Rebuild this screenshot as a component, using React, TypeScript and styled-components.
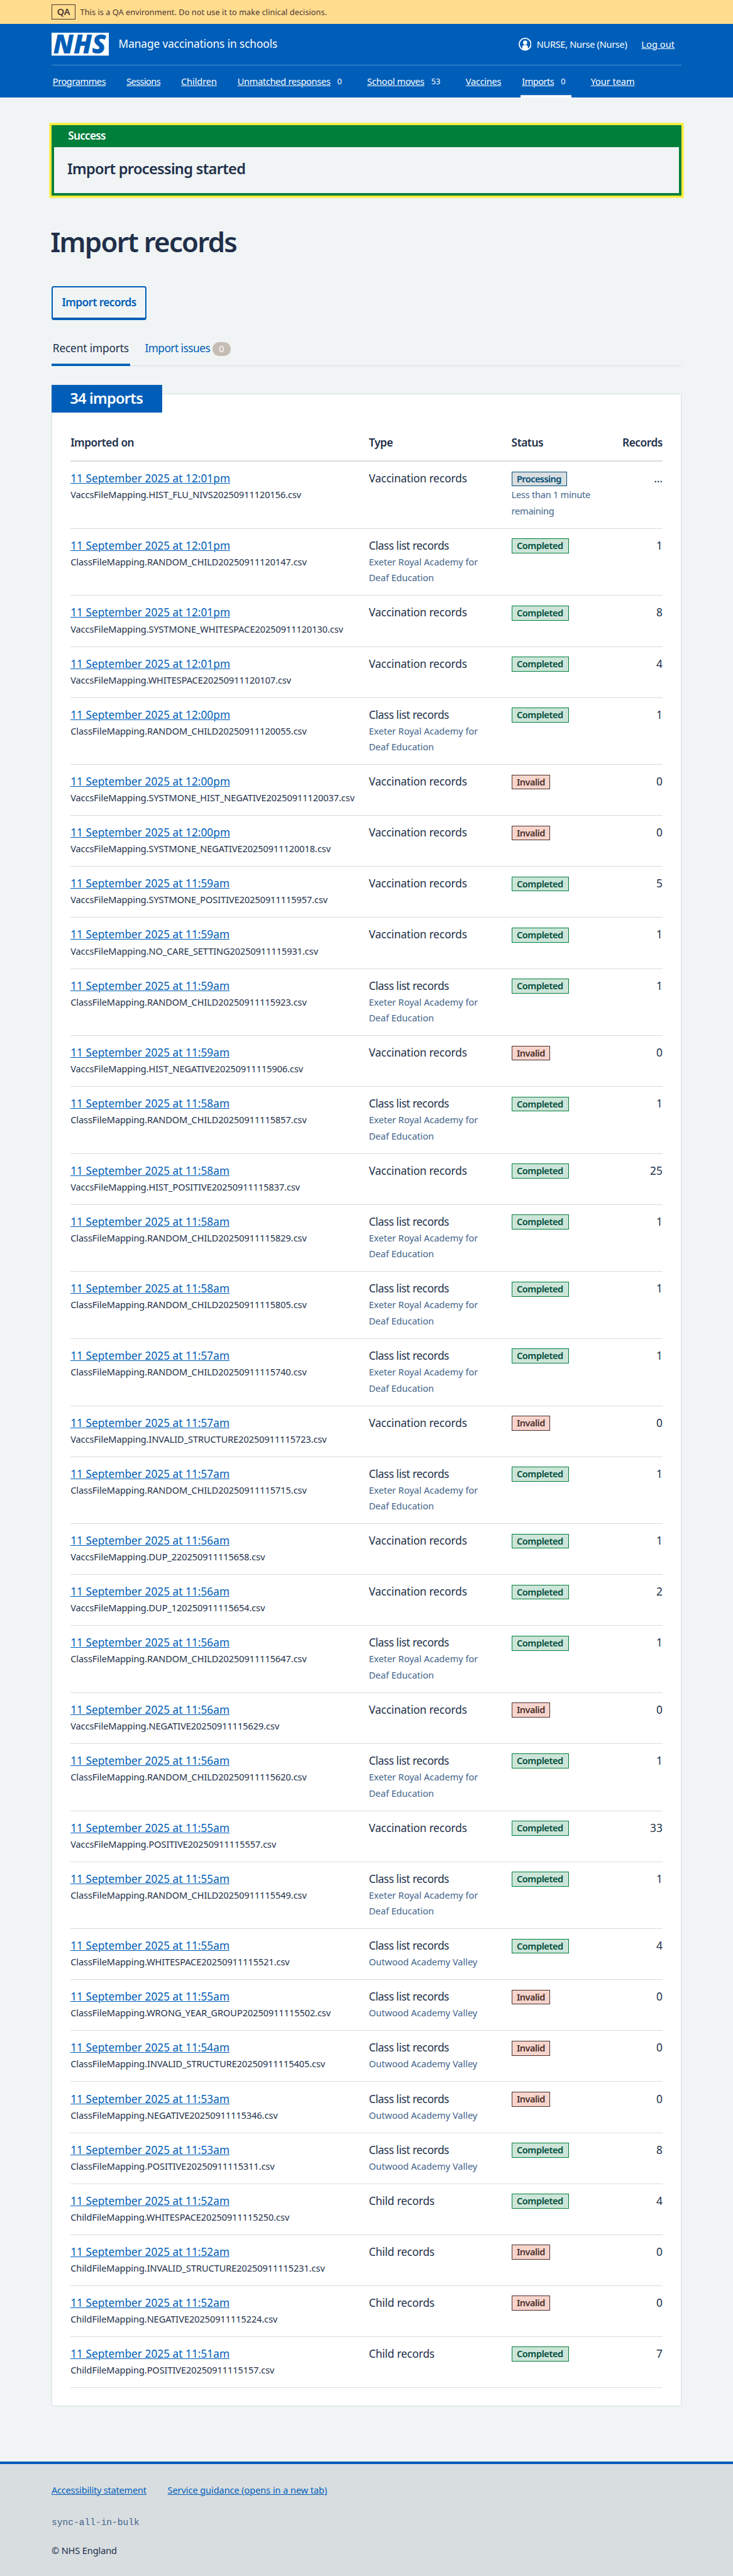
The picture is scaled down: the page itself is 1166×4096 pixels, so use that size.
import React from "react";
import styled, { createGlobalStyle, css } from "styled-components";

/* Design units are converted to screen pixels with one page-wide factor. */
const SCALE = 4096 / 4496;
const u = (...n: number[]) => n.map((v) => `${+(v * SCALE).toFixed(3)}px`).join(" ");

const color = {
  blue: "#005eb8",
  text: "#212f49",
  muted: "#42648a",
  page: "#f0f4f5",
  border: "#d8dde0",
  green: "#007f3b",
  focus: "#ffeb3b",
  white: "#ffffff",
};

const font = (size: number, line: number, weight = 400, track = 0) => css`
  font-size: ${u(size)};
  line-height: ${u(line)};
  font-weight: ${weight};
  letter-spacing: ${track}em;
`;

const GlobalStyle = createGlobalStyle`
  *, *::before, *::after { box-sizing: border-box; }
  body {
    margin: 0;
    background: ${color.page};
    color: ${color.text};
    font-family: "Noto Sans", "Open Sans", sans-serif;
  }
  h1, h2, h3, p, ul { margin: 0; padding: 0; font-weight: inherit; }
  ul { list-style: none; }
`;

const Page = styled.div`
  display: flex;
  flex-direction: column;
  height: 4096px;
  overflow: hidden;
`;

const Link = styled.a`
  color: ${color.blue};
  text-decoration: underline;
  text-decoration-thickness: 1px;
  text-underline-offset: ${u(1.6)};
`;

const EnvironmentBar = styled.div`
  display: flex;
  flex-shrink: 0;
  align-items: center;
  gap: ${u(8)};
  height: ${u(42)};
  padding: ${u(0, 90)};
  background: #ffdc8e;
  color: #4d3635;
  white-space: nowrap;
`;

const EnvironmentTag = styled.strong`
  width: ${u(42)};
  height: ${u(26)};
  border: 1px solid #4d3635;
  text-align: center;
  ${font(16, 23.6, 600)}
`;

const EnvironmentText = styled.span`
  ${font(14, 24, 400, 0.003)}
  padding-top: ${u(1)};
`;

const Header = styled.header`
  display: flex;
  flex-direction: column;
  flex-shrink: 0;
  height: ${u(128)};
  padding: ${u(0, 90)};
  background: ${color.blue};
  color: ${color.white};
`;

const HeaderTop = styled.div`
  display: flex;
  align-items: center;
  height: ${u(72)};
  border-bottom: 1px solid #4b92d2;
  white-space: nowrap;
`;

const Logo = styled.svg`
  display: block;
  width: ${u(100)};
  height: ${u(40)};
  overflow: visible;
`;

const ServiceName = styled.span`
  ${font(19, 28, 400, -0.0063)}
  padding: ${u(0, 0, 2, 17)};
`;

const Account = styled.div`
  display: flex;
  align-items: center;
  margin-left: auto;
  padding-right: ${u(12)};
`;

const AccountIcon = styled.svg`
  width: ${u(22.6)};
  height: ${u(22.6)};
  margin-right: ${u(9.4)};
`;

const AccountName = styled.span`
  ${font(16, 28, 400, -0.02)}
  margin-right: ${u(25)};
`;

const LogOut = styled(Link)`
  color: ${color.white};
  ${font(16, 28, 400, 0.005)}
`;

const Nav = styled.nav`
  display: flex;
  gap: ${u(32.2)};
  height: ${u(56)};
  white-space: nowrap;
`;

const NavItem = styled.div<{ $current?: boolean }>`
  display: flex;
  align-items: center;
  padding: ${u(0, 2)};
  box-shadow: ${(p) => (p.$current ? `inset 0 -${u(4)} 0 ${color.white}` : "none")};
`;

const NavLink = styled(Link)<{ $track: number }>`
  color: ${color.white};
  ${(p) => font(16, 28, 400, p.$track)}
`;

const NavCount = styled.span`
  ${font(14, 28)}
  padding: ${u(1.4, 8, 0, 12)};
`;

const Main = styled.main`
  display: flex;
  flex-direction: column;
  flex-shrink: 0;
  align-items: stretch;
  padding: ${u(48, 90, 0)};
`;

const Notice = styled.section`
  height: ${u(123)};
  border: ${u(4.4)} solid ${color.green};
  border-top: 0;
  box-shadow: 0 0 0 ${u(4)} ${color.focus};
`;

const NoticeTitle = styled.h2`
  height: ${u(39)};
  padding: ${u(4, 24.5)};
  background: ${color.green};
  color: ${color.white};
  ${font(19, 29, 600, -0.0466)}
`;

const NoticeText = styled.p`
  padding: ${u(21, 23)};
  ${font(26, 35, 600, -0.031)}
`;

const Title = styled.h1`
  margin: ${u(50.7, 0, 0, -2)};
  ${font(48, 60, 600, -0.0395)}
`;

const Button = styled.button`
  align-self: flex-start;
  width: ${u(166)};
  height: ${u(60)};
  margin-top: ${u(47.3)};
  padding: ${u(0, 0, 1)};
  border: 2px solid ${color.blue};
  border-bottom-width: ${u(4.4)};
  border-radius: ${u(4)};
  background: transparent;
  color: ${color.blue};
  font-family: inherit;
  white-space: nowrap;
  ${font(19, 28, 600, -0.0352)}
`;

const Tabs = styled.div`
  display: flex;
  height: ${u(60)};
  margin-top: ${u(20)};
  border-bottom: 1px solid ${color.border};
`;

const Tab = styled.a<{ $current?: boolean }>`
  display: flex;
  align-items: flex-start;
  height: ${u(60)};
  padding: ${u(14.6, 2, 0)};
  margin-right: ${u(24)};
  white-space: nowrap;
  color: ${(p) => (p.$current ? color.text : color.blue)};
  box-shadow: ${(p) => (p.$current ? `inset 0 -${u(4)} 0 ${color.blue}` : "none")};
  ${(p) => font(19, 28, 400, p.$current ? -0.0096 : -0.0312)}
`;

const TabCount = styled.span`
  width: ${u(32)};
  height: ${u(24)};
  margin: ${u(3.4, 0, 0, 4)};
  border-radius: ${u(12)};
  background: #c5bcb3;
  color: ${color.white};
  text-align: center;
  ${font(16, 24)}
`;

const Card = styled.section`
  height: ${u(3512.7)};
  margin-top: ${u(48)};
  padding: ${u(0, 32)};
  border: 1px solid ${color.border};
  background: ${color.white};
`;

const CardTitle = styled.h2`
  width: ${u(193)};
  height: ${u(48)};
  margin: ${u(-16, 0, 0, -33)};
  padding-left: ${u(32)};
  background: ${color.blue};
  color: ${color.white};
  white-space: nowrap;
  ${font(26, 46.6, 600, -0.033)}
`;

const row = css`
  display: grid;
  grid-template-columns: ${u(521, 249)} 1fr ${u(110)};
  white-space: nowrap;
`;

const TableHead = styled.div`
  ${row}
  height: ${u(86)};
  padding-top: ${u(38.8)};
  border-bottom: 2px solid ${color.border};
`;

const HeadCell = styled.div<{ $end?: boolean }>`
  text-align: ${(p) => (p.$end ? "right" : "left")};
  ${font(19, 28, 600, -0.027)}
`;

const Row = styled.div<{ $tall: boolean }>`
  ${row}
  height: ${(p) => u(p.$tall ? 117 : 89)};
  padding-top: ${u(14.3)};
  border-bottom: 1px solid ${color.border};
`;

const Primary = styled.div<{ $end?: boolean; $track?: number }>`
  text-align: ${(p) => (p.$end ? "right" : "left")};
  ${(p) => font(19, 29.7, 400, p.$track ?? 0)}
`;

const FileName = styled.div`
  ${font(16, 28, 400, -0.0055)}
`;

const Hint = styled.div<{ $track: number }>`
  color: ${color.muted};
  white-space: pre-line;
  ${(p) => font(16, 28, 400, p.$track)}
`;

type Status = "Processing" | "Completed" | "Invalid";

const tagLook = {
  Processing: { bg: "#d8dde0", fg: "#004b72", width: 96.6, track: -0.039 },
  Completed: { bg: "#cce5d8", fg: "#004c3a", width: 100, track: -0.028 },
  Invalid: { bg: "#f7d4cb", fg: "#4a2f2d", width: 67.8, track: -0.035 },
};

const Tag = styled.strong<{ $status: Status }>`
  display: block;
  width: ${(p) => u(tagLook[p.$status].width)};
  height: ${u(26)};
  margin: ${u(2.7, 0, 1)};
  padding-left: ${u(8)};
  border: 1px solid ${(p) => (p.$status === "Completed" ? color.green : tagLook[p.$status].fg)};
  background: ${(p) => tagLook[p.$status].bg};
  color: ${(p) => tagLook[p.$status].fg};
  ${(p) => font(16, 23.6, 600, tagLook[p.$status].track)}
`;

const Footer = styled.footer`
  flex: 1 0 auto;
  margin-top: ${u(96.3)};
  padding: ${u(32, 90, 0)};
  border-top: ${u(4.4)} solid ${color.blue};
  background: ${color.border};
`;

const FooterLinks = styled.div`
  display: flex;
  gap: ${u(37)};
`;

const FooterLink = styled(Link)<{ $track: number }>`
  ${(p) => font(16, 28, 400, p.$track)}
`;

const Branch = styled.p`
  margin-top: ${u(29)};
  color: ${color.muted};
  font-family: "Liberation Mono", monospace;
  ${font(16, 28)}
`;

const Copyright = styled.p`
  margin-top: ${u(20.6)};
  ${font(16, 28, 400, -0.008)}
`;

const nav: { label: string; track: number; count?: string; current?: boolean }[] = [
  { label: "Programmes", track: -0.029 },
  { label: "Sessions", track: -0.041 },
  { label: "Children", track: -0.007 },
  { label: "Unmatched responses", track: -0.0205, count: "0" },
  { label: "School moves", track: -0.0163, count: "53" },
  { label: "Vaccines", track: -0.018 },
  { label: "Imports", track: -0.035, count: "0", current: true },
  { label: "Your team", track: -0.0044 },
];

const types = {
  V: { label: "Vaccination records", track: -0.0078 },
  C: { label: "Class list records", track: -0.0248 },
  H: { label: "Child records", track: -0.01 },
};

const schools = {
  E: { label: "Exeter Royal Academy for\nDeaf Education", track: -0.0015 },
  O: { label: "Outwood Academy Valley", track: -0.003 },
};

type Import = [string, string, keyof typeof types, keyof typeof schools | "", Status, string];

const imports: Import[] = [
  ["12:01pm", "VaccsFileMapping.HIST_FLU_NIVS20250911120156.csv", "V", "", "Processing", "…"],
  ["12:01pm", "ClassFileMapping.RANDOM_CHILD20250911120147.csv", "C", "E", "Completed", "1"],
  ["12:01pm", "VaccsFileMapping.SYSTMONE_WHITESPACE20250911120130.csv", "V", "", "Completed", "8"],
  ["12:01pm", "VaccsFileMapping.WHITESPACE20250911120107.csv", "V", "", "Completed", "4"],
  ["12:00pm", "ClassFileMapping.RANDOM_CHILD20250911120055.csv", "C", "E", "Completed", "1"],
  ["12:00pm", "VaccsFileMapping.SYSTMONE_HIST_NEGATIVE20250911120037.csv", "V", "", "Invalid", "0"],
  ["12:00pm", "VaccsFileMapping.SYSTMONE_NEGATIVE20250911120018.csv", "V", "", "Invalid", "0"],
  ["11:59am", "VaccsFileMapping.SYSTMONE_POSITIVE20250911115957.csv", "V", "", "Completed", "5"],
  ["11:59am", "VaccsFileMapping.NO_CARE_SETTING20250911115931.csv", "V", "", "Completed", "1"],
  ["11:59am", "ClassFileMapping.RANDOM_CHILD20250911115923.csv", "C", "E", "Completed", "1"],
  ["11:59am", "VaccsFileMapping.HIST_NEGATIVE20250911115906.csv", "V", "", "Invalid", "0"],
  ["11:58am", "ClassFileMapping.RANDOM_CHILD20250911115857.csv", "C", "E", "Completed", "1"],
  ["11:58am", "VaccsFileMapping.HIST_POSITIVE20250911115837.csv", "V", "", "Completed", "25"],
  ["11:58am", "ClassFileMapping.RANDOM_CHILD20250911115829.csv", "C", "E", "Completed", "1"],
  ["11:58am", "ClassFileMapping.RANDOM_CHILD20250911115805.csv", "C", "E", "Completed", "1"],
  ["11:57am", "ClassFileMapping.RANDOM_CHILD20250911115740.csv", "C", "E", "Completed", "1"],
  ["11:57am", "VaccsFileMapping.INVALID_STRUCTURE20250911115723.csv", "V", "", "Invalid", "0"],
  ["11:57am", "ClassFileMapping.RANDOM_CHILD20250911115715.csv", "C", "E", "Completed", "1"],
  ["11:56am", "VaccsFileMapping.DUP_220250911115658.csv", "V", "", "Completed", "1"],
  ["11:56am", "VaccsFileMapping.DUP_120250911115654.csv", "V", "", "Completed", "2"],
  ["11:56am", "ClassFileMapping.RANDOM_CHILD20250911115647.csv", "C", "E", "Completed", "1"],
  ["11:56am", "VaccsFileMapping.NEGATIVE20250911115629.csv", "V", "", "Invalid", "0"],
  ["11:56am", "ClassFileMapping.RANDOM_CHILD20250911115620.csv", "C", "E", "Completed", "1"],
  ["11:55am", "VaccsFileMapping.POSITIVE20250911115557.csv", "V", "", "Completed", "33"],
  ["11:55am", "ClassFileMapping.RANDOM_CHILD20250911115549.csv", "C", "E", "Completed", "1"],
  ["11:55am", "ClassFileMapping.WHITESPACE20250911115521.csv", "C", "O", "Completed", "4"],
  ["11:55am", "ClassFileMapping.WRONG_YEAR_GROUP20250911115502.csv", "C", "O", "Invalid", "0"],
  ["11:54am", "ClassFileMapping.INVALID_STRUCTURE20250911115405.csv", "C", "O", "Invalid", "0"],
  ["11:53am", "ClassFileMapping.NEGATIVE20250911115346.csv", "C", "O", "Invalid", "0"],
  ["11:53am", "ClassFileMapping.POSITIVE20250911115311.csv", "C", "O", "Completed", "8"],
  ["11:52am", "ChildFileMapping.WHITESPACE20250911115250.csv", "H", "", "Completed", "4"],
  ["11:52am", "ChildFileMapping.INVALID_STRUCTURE20250911115231.csv", "H", "", "Invalid", "0"],
  ["11:52am", "ChildFileMapping.NEGATIVE20250911115224.csv", "H", "", "Invalid", "0"],
  ["11:51am", "ChildFileMapping.POSITIVE20250911115157.csv", "H", "", "Completed", "7"],
];

function NhsLogo() {
  return (
    <Logo viewBox="0 0 100 40" role="img" aria-label="NHS">
      <rect width="100" height="40" fill="#fff" />
      <text
        x="3"
        y="36.4"
        textLength="92"
        lengthAdjust="spacingAndGlyphs"
        fontFamily="'Noto Sans', sans-serif"
        fontSize="46"
        fontWeight="900"
        fontStyle="italic"
        fill={color.blue}
      >
        NHS
      </text>
    </Logo>
  );
}

function ImportRow({ item }: { item: Import }) {
  const [time, file, type, school, status, records] = item;
  const processing = status === "Processing";
  return (
    <Row $tall={processing || school === "E"}>
      <div>
        <Primary>
          <Link>11 September 2025 at {time}</Link>
        </Primary>
        <FileName>{file}</FileName>
      </div>
      <div>
        <Primary $track={types[type].track}>{types[type].label}</Primary>
        {school && <Hint $track={schools[school].track}>{schools[school].label}</Hint>}
      </div>
      <div>
        <Tag $status={status}>{status}</Tag>
        {processing && <Hint $track={-0.017}>{"Less than 1 minute\nremaining"}</Hint>}
      </div>
      <Primary $end>{records}</Primary>
    </Row>
  );
}

export default function App() {
  return (
    <Page>
      <GlobalStyle />
      <EnvironmentBar>
        <EnvironmentTag>QA</EnvironmentTag>
        <EnvironmentText>
          This is a QA environment. Do not use it to make clinical decisions.
        </EnvironmentText>
      </EnvironmentBar>
      <Header>
        <HeaderTop>
          <NhsLogo />
          <ServiceName>Manage vaccinations in schools</ServiceName>
          <Account>
            <AccountIcon viewBox="0 0 24 24" fill="#fff">
              <circle cx="12" cy="12" r="10.9" fill="none" stroke="#fff" strokeWidth="2.1" />
              <rect x="8.2" y="5.2" width="7.6" height="7.8" rx="3.6" />
              <path d="M6.8 21V17.4a3.6 3.6 0 0 1 3.6-3.6h3.2a3.6 3.6 0 0 1 3.6 3.6V21a10 10 0 0 1-10.4 0Z" />
            </AccountIcon>
            <AccountName>NURSE, Nurse (Nurse)</AccountName>
            <LogOut>Log out</LogOut>
          </Account>
        </HeaderTop>
        <Nav>
          {nav.map((n) => (
            <NavItem key={n.label} $current={n.current}>
              <NavLink $track={n.track}>{n.label}</NavLink>
              {n.count && <NavCount>{n.count}</NavCount>}
            </NavItem>
          ))}
        </Nav>
      </Header>
      <Main>
        <Notice>
          <NoticeTitle>Success</NoticeTitle>
          <NoticeText>Import processing started</NoticeText>
        </Notice>
        <Title>Import records</Title>
        <Button>Import records</Button>
        <Tabs>
          <Tab $current>Recent imports</Tab>
          <Tab>
            Import issues
            <TabCount>0</TabCount>
          </Tab>
        </Tabs>
        <Card>
          <CardTitle>34 imports</CardTitle>
          <TableHead>
            <HeadCell>Imported on</HeadCell>
            <HeadCell>Type</HeadCell>
            <HeadCell>Status</HeadCell>
            <HeadCell $end>Records</HeadCell>
          </TableHead>
          {imports.map((item) => (
            <ImportRow key={item[1]} item={item} />
          ))}
        </Card>
      </Main>
      <Footer>
        <FooterLinks>
          <FooterLink $track={-0.0151}>Accessibility statement</FooterLink>
          <FooterLink $track={-0.0055}>Service guidance (opens in a new tab)</FooterLink>
        </FooterLinks>
        <Branch>sync-all-in-bulk</Branch>
        <Copyright>© NHS England</Copyright>
      </Footer>
    </Page>
  );
}
